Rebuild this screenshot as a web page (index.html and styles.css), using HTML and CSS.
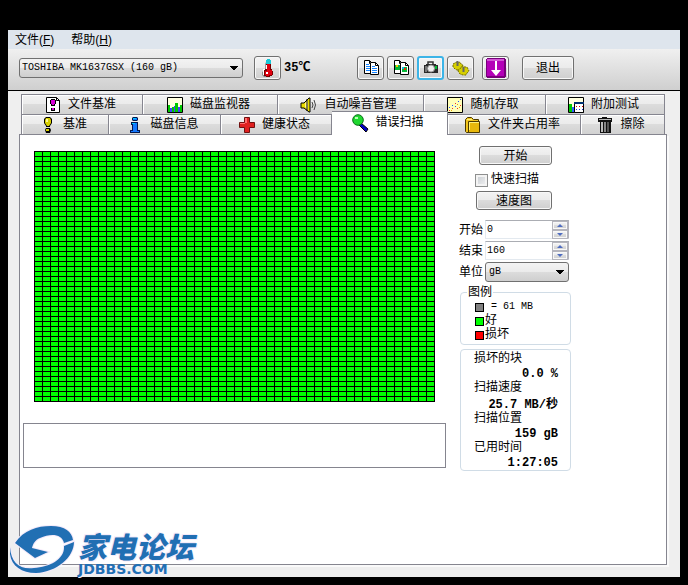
FILE: index.html
```html
<!DOCTYPE html>
<html lang="zh-CN">
<head>
<meta charset="utf-8">
<title>错误扫描</title>
<link rel="stylesheet" href="styles.css">
</head>
<body>
<main class="window">
  <nav class="menubar">
    <a href="#file">文件(<u>F</u>)</a>
    <a href="#help">帮助(<u>H</u>)</a>
  </nav>
  <header class="toolbar">
    <select class="drive" aria-label="磁盘"><option>TOSHIBA MK1637GSX (160 gB)</option></select>
    <button class="tool temp" type="button" aria-label="温度">
      <svg width="16" height="20" viewBox="0 0 16 20"><path d="M5 4v8l-3 2v3l2 2h5l2-2z" fill="#000" opacity=".35"/><path d="M6 2h5v9h1v2h1v4h-1v1h-2v1H6v-1H4v-2H3v-3h1v-2h2z" fill="#700"/><path d="M7 6h3v6h2v5H9v1H6v-1H5v-4h2z" fill="#e00010"/><path d="M6 2h1V1h3v1h1v4H6z" fill="#18c8d8"/><path d="M3 11h2v1H4v5H3zM6 14h2v2H6zM6 7h1v4H6z" fill="#fff"/></svg>
    </button>
    <output class="degrees">35℃</output>
    <div class="tools">
      <button class="tool" type="button" aria-label="复制文本">
        <svg width="18" height="18" viewBox="0 0 18 18"><path d="M2.500 1.500h5l3 3v10h-8z" fill="#fff" stroke="#000"/><path d="M7.500 1.500v3h3" fill="none" stroke="#000"/><path d="M4 5h3v1H4zm0 2h4v1H4zm0 2h4v1H4zm0 2h4v1H4z" fill="#1684ff"/><path d="M8.500 3.500h5l3 3v9h-8z" fill="#fff" stroke="#000"/><path d="M13.500 3.500v3h3" fill="none" stroke="#000"/><path d="M10 7h3v1h-3zm0 2h5v1h-5zm0 2h5v1h-5zm0 2h5v1h-5z" fill="#1684ff"/></svg>
      </button>
      <button class="tool" type="button" aria-label="复制图像">
        <svg width="18" height="18" viewBox="0 0 18 18"><path d="M2.500 1.500h5l3 3v10h-8z" fill="#fff" stroke="#000"/><path d="M7.500 1.500v3h3" fill="none" stroke="#000"/><path d="M3 6h5v5H3z" fill="#06b838"/><path d="M4 6h2v2H4z" fill="#f5c800"/><path d="M8.500 3.500h5l3 3v9h-8z" fill="#fff" stroke="#000"/><path d="M13.500 3.500v3h3" fill="none" stroke="#000"/><path d="M10 8h5v5h-5z" fill="#06b838"/><path d="M12 9h2v2h-2z" fill="#e03000"/><path d="M10 8h2v2h-2z" fill="#16b4e8"/></svg>
      </button>
      <button class="tool active" type="button" aria-label="截图">
        <svg width="18" height="18" viewBox="0 0 18 18"><path d="M6 5V3h5v2" fill="none" stroke="#333" stroke-width="1.500"/><path d="M2 6h2V5h10v1h2v8H2z" fill="#292929"/><path d="M3 7h2v6H3z" fill="#777"/><circle cx="9" cy="9.500" r="3.500" fill="#eee" stroke="#999"/><path d="M13 7h2v3h-2z" fill="#0b3"/></svg>
      </button>
      <button class="tool" type="button" aria-label="选项">
        <svg width="18" height="18" viewBox="0 0 18 18"><path d="M1 5l2-1 1-1 2 1 2-1 1 2 2 1-1 2 0 2-3 1-2 0-2-1-2-2z" fill="#d6cf00" stroke="#736f00" stroke-dasharray="2 1"/><path d="M6 12l1-2 2-1 1-2 3 1 2 0 1 2 1 2-2 2-1 2-3 0-3-1z" fill="#d6cf00" stroke="#736f00" stroke-dasharray="2 1"/><path d="M5.500 2v5M11.500 8v5" stroke="#666" stroke-width="2"/></svg>
      </button>
      <button class="tool save" type="button" aria-label="保存">
        <svg width="20" height="20" viewBox="0 0 20 20"><path d="M1 0h18v1h1v18h-1v1H1v-1H0V1h1z" fill="#77007a"/><path d="M1 1h17v17H1z" fill="#b400b8"/><path d="M1 1h17v2H1z" fill="#d255d5"/><path d="M9 3h2v9h4l-5 6-5-6h4z" fill="#fff"/></svg>
      </button>
      <button class="exit" type="button">退出</button>
    </div>
  </header>

  <div class="tabs" role="tablist">
    <div class="row back">
      <button type="button" role="tab"><svg width="18" height="18" viewBox="0 0 18 18"><path d="M2.500 1.500h10l3 3v12h-13z" fill="#fff" stroke="#000"/><path d="M12.500 1.500v3h3" fill="none" stroke="#000"/><path d="M7 3h4v1h1v4h-1v2H7V8H6V4h1zM7 12h4v3H7z" fill="#000"/><path d="M7 4h4v4h-1v1H8V8H7zM8 12h2v2H8z" fill="#d800d8"/></svg>文件基准</button>
      <button type="button" role="tab"><svg width="18" height="18" viewBox="0 0 18 18"><path d="M1.500 1.500h15v15h-15z" fill="#ffffe0" stroke="#000"/><path d="M2 9h2v7H2zm4 2h2v5H6zm3-4h3v9H9zm5 2h2v7h-2z" fill="#00c800"/><path d="M4 12h2v4H4zm4-2h1v6H8zm4 1h2v5h-2z" fill="#4040ff"/></svg>磁盘监视器</button>
      <button type="button" role="tab"><svg width="18" height="18" viewBox="0 0 18 18"><path d="M1 7h3l5-5h1v14H9l-5-4H1z" fill="#e8dc00" stroke="#000"/><path d="M5 7l3-3v10l-3-3z" fill="#fff790"/><path d="M7 3v12" stroke="#000"/><path d="M12 6q2 3 0 6M14 4q3 5 0 10" fill="none" stroke="#444"/></svg>自动噪音管理</button>
      <button type="button" role="tab"><svg width="18" height="18" viewBox="0 0 18 18"><path d="M1.500 1.500h15v15h-15z" fill="#ffffb8" stroke="#000"/><path d="M3 11h1v1H3zm3-2h1v1H6zm3 1h1v1H9zm3-5h1v1h-1zm2-2h1v1h-1z" fill="#2050ff"/><path d="M3 14h1v1H3zm3-2h1v1H6zm3-5h1v1H9zm2 5h1v1h-1zm3-3h1v1h-1z" fill="#f03030"/><path d="M5 14h1v1H5zm6-6h1v1h-1zm2 3h1v1h-1z" fill="#e6a000"/></svg>随机存取</button>
      <button type="button" role="tab"><svg width="18" height="18" viewBox="0 0 18 18"><path d="M1.500 1.500h15v15h-15z" fill="#ffffe0" stroke="#000"/><path d="M2 8h3v8H2z" fill="#00c800"/><path d="M5 11h2v5H5z" fill="#3060ff"/><path d="M7.500 7.500h9v9h-9z" fill="#fff" stroke="#000"/><path d="M7 6h10v2H7z" fill="#003070"/><path d="M9 10h1v1H9zm3 0h1v1h-1zm3 0h1v1h-1z" fill="#e00000"/><path d="M9 13h1v1H9zm3 0h1v1h-1zm3 0h1v1h-1z" fill="#2040e0"/></svg>附加测试</button>
    </div>
    <div class="row front">
      <button type="button" role="tab"><svg width="18" height="18" viewBox="0 0 18 18"><path d="M7 1h4l2 2v4l-2 3v1H7v-1L5 7V3z" fill="#000"/><path d="M7 2h4l1 2v3l-2 3H8L6 7V4z" fill="#d8d000"/><path d="M7 3h2v3H7z" fill="#fff79a"/><path d="M7 12h4l1 2-1 3H7l-1-3z" fill="#000"/><path d="M7 13h3v2H7z" fill="#d8d000"/></svg>基准</button>
      <button type="button" role="tab"><svg width="18" height="18" viewBox="0 0 18 18"><path d="M7 1h4l1 1v2l-1 1H7L6 4V2zM5 6h7v8h2v3H4v-3h2V9H5z" fill="#001850"/><path d="M7 2h4v2H7zM6 7h5v8h2v1H5v-1h2V8H6z" fill="#1478ff"/><path d="M7 2h3v1H7zM6 7h3v1H6z" fill="#00c8ff"/></svg>磁盘信息</button>
      <button type="button" role="tab"><svg width="18" height="18" viewBox="0 0 18 18"><path d="M6.500 1.500h5v5h5v5h-5v5h-5v-5h-5v-5h5z" fill="#e02020" stroke="#701010"/><path d="M7 2h2v5H7zM2 7h5v1H2z" fill="#ff7070"/></svg>健康状态</button>
      <button class="selected" type="button" role="tab" aria-selected="true"><svg width="18" height="18" viewBox="0 0 18 18"><path d="M10 9l7 6-2 3-7-7z" fill="#0000c8" stroke="#000"/><circle cx="7" cy="6" r="5.300" fill="#20d830" stroke="#087018"/><path d="M4 3h3v2H4z" fill="#baffb5"/></svg>错误扫描</button>
      <button type="button" role="tab"><svg width="18" height="18" viewBox="0 0 18 18"><path d="M1.500 3.500l2-2h4l2 2h5v13h-12l-1-1z" fill="#f1c51e" stroke="#4b3900"/><path d="M4.500 5.500h11v11h-11z" fill="#e8b80c" stroke="#4b3900"/><path d="M3 3h5v1H3zM5 6h10v1H5zm0 0h1v8H5z" fill="#fff17c"/></svg>文件夹占用率</button>
      <button type="button" role="tab"><svg width="18" height="18" viewBox="0 0 18 18"><path d="M6 1h5v1h5v4h-1v11H4V6H2V2h4z" fill="#111"/><path d="M3 3h12v1H3zM5 6h2v10H5z" fill="#bbb"/><path d="M8 6h2v10H8z" fill="#888"/><path d="M11 6h2v10h-2z" fill="#555"/></svg>擦除</button>
    </div>
  </div>

  <section class="panel">
    <div class="scan">
      <div class="blocks" role="img" aria-label="好"></div>
      <textarea class="log" aria-label="日志" readonly></textarea>
    </div>
    <form class="side">
      <button class="push start" type="button">开始</button>
      <label class="quick"><input type="checkbox">快速扫描</label>
      <button class="push map" type="button">速度图</button>
      <div class="fields">
        <label for="from">开始</label>
        <div class="spin"><input id="from" value="0"><button type="button" aria-label="增加"></button><button class="down" type="button" aria-label="减少"></button></div>
        <label for="to">结束</label>
        <div class="spin"><input id="to" value="160"><button type="button" aria-label="增加"></button><button class="down" type="button" aria-label="减少"></button></div>
        <label for="unit">单位</label>
        <select id="unit"><option>gB</option></select>
      </div>
      <fieldset class="legend">
        <legend>图例</legend>
        <ul>
          <li><i class="gray"></i><span class="size">= 61 MB</span></li>
          <li><i class="good"></i>好</li>
          <li><i class="bad"></i>损坏</li>
        </ul>
      </fieldset>
      <dl class="stats">
        <dt>损坏的块</dt><dd>0.0 %</dd>
        <dt>扫描速度</dt><dd class="speed">25.7 MB/秒</dd>
        <dt>扫描位置</dt><dd>159 gB</dd>
        <dt>已用时间</dt><dd>1:27:05</dd>
      </dl>
    </form>
  </section>

  <div class="logo">
    <svg width="66" height="50" viewBox="0 0 66 50"><g stroke="#f4eafa" stroke-width="2" paint-order="stroke" fill="#216fb3"><path d="M5 18C14 5 27 1 41 1c14 0 21 6 22 14L54 18C52 9 41 8 30 13c-5 2-7 6-8 10l16 4-13 6z"/><path d="M64 17c0 15-17 30-38 31C9 48-2 38 0 22 1 38 10 45 24 43 40 42 55 34 54 21z"/></g></svg>
    <div class="words"><span class="name">家电论坛</span><span class="site">JDBBS.COM</span></div>
  </div>
</main>
</body>
</html>
```
FILE: styles.css
```css
* { box-sizing: border-box; }

body {
  margin: 0;
  min-height: 100vh;
  padding: 30px 8px 8px;
  display: flex;
  background: #000;
  color: #000;
  font: 12px/16px "Liberation Mono", "Noto Sans CJK SC", monospace;
}

button, input, select, textarea { font: inherit; color: inherit; margin: 0; }

button {
  padding: 2px 0 0;
  border: 1px solid #707070;
  border-radius: 3px;
  background: linear-gradient(#f3f3f3, #ebebeb 49%, #dcdcdc 50%, #cfcfcf);
  box-shadow: inset 0 0 0 1px #f8f8f8;
}

svg { display: block; flex: none; }

select {
  appearance: none;
  border: 1px solid #707070;
  border-radius: 3px;
  font-size: 10px;
  background:
    linear-gradient(to bottom left, #000 50%, transparent 51%) no-repeat right 8px center / 4px 4px,
    linear-gradient(to bottom right, #000 50%, transparent 51%) no-repeat right 4px center / 4px 4px,
    linear-gradient(#f3f3f3, #ebebeb 49%, #dcdcdc 50%, #cfcfcf);
}

.window {
  position: relative;
  flex: 1;
  display: flex;
  flex-direction: column;
  background: #efefef;
}

.menubar {
  display: flex;
  gap: 17px;
  height: 19px;
  padding: 2px 7px 0;
  background: #dee5ed;
  font-family: "Liberation Sans", "Noto Sans CJK SC", sans-serif;
}

.menubar a { color: #000; text-decoration: none; }

.toolbar {
  display: flex;
  align-items: center;
  height: 42px;
  padding: 0 11px 3px;
  border-bottom: 1px solid #000;
  background: linear-gradient(#f0f0f0, #cfcfcf);
}

.drive { width: 224px; height: 20px; padding: 0 2px; }

.tool {
  display: grid;
  place-items: center;
  width: 27px;
  height: 24px;
  padding: 0;
}

.temp { margin: 0 3px 0 11px; }
.active { border: 2px solid #3cb4e7; }
.save { margin-left: 5px; }
.degrees { font-weight: bold; width: 73px; }
.tools { display: flex; gap: 3px; }
.exit { width: 52px; height: 24px; margin-left: 10px; }

.tabs { padding: 3px 15px 0 13px; }
.row { display: grid; }
.back { grid-template-columns: 122fr 135fr 146fr 122fr 119fr; }
.front { grid-template-columns: 88fr 112fr 111fr 116fr 133fr 84fr; }

.row button {
  display: flex;
  align-items: center;
  justify-content: center;
  gap: 6px;
  height: 20px;
  padding: 1px 4px 0 0;
  border: 1px solid #85858f;
  border-width: 1px 1px 0 0;
  border-radius: 0;
  background: linear-gradient(#f2f2f2, #ebebeb 49%, #dcdcdc 50%, #d2d2d2);
  box-shadow: inset 1px 1px #fff;
}

.row button:first-child { border-left-width: 1px; }

.front .selected {
  position: relative;
  height: 24px;
  margin: -3px 0 -1px;
  padding-bottom: 2px;
  background: #fff;
}

.panel {
  flex: 1;
  display: flex;
  align-items: flex-start;
  gap: 13px;
  margin: 0 13px 12px 11px;
  border: 1px solid #85858f;
  background: #fff;
  box-shadow: 2px 2px #fafafa;
}

.scan { width: 423px; margin-left: 3px; padding-top: 16px; }

.blocks {
  width: 401px;
  height: 251px;
  margin-left: 11px;
  background:
    linear-gradient(90deg, #000 1px, transparent 1px) 0 0 / 8px 5px,
    linear-gradient(#000 1px, #0f0 1px) 0 0 / 8px 5px;
}

.log {
  display: block;
  width: 100%;
  height: 45px;
  margin-top: 21px;
  border: 1px solid #85858f;
  background: #fff;
  resize: none;
}

.side { width: 112px; padding-top: 11px; }
.push { display: block; height: 19px; line-height: 16px; }
.start { width: 73px; margin-left: 20px; }
.map { width: 76px; margin-left: 17px; }

.quick {
  display: flex;
  align-items: center;
  gap: 3px;
  height: 26px;
  padding: 4px 0 0 16px;
}

.quick input {
  appearance: none;
  width: 13px;
  height: 13px;
  border: 1px solid #8e8f8f;
  background: linear-gradient(135deg, #c5cad0, #f4f4f4);
  box-shadow: inset 0 0 0 2px #f4f4f4;
}

.fields {
  display: grid;
  grid-template-columns: 24px 84px;
  align-items: center;
  gap: 2px;
  margin-top: 10px;
}

.fields label { padding-top: 2px; }
.fields select { height: 20px; padding: 0 3px; }

.spin {
  display: grid;
  grid-template: 9px 9px / 1fr 16px;
  height: 19px;
  border: 1px solid #e3e9ef;
  border-top-color: #abadb3;
  border-right-color: #b5b5bd;
}

.spin input {
  grid-row: 1 / 3;
  min-width: 0;
  border: 0;
  padding: 0 1px;
  background: none;
  font-size: 10px;
}

.spin button {
  display: grid;
  place-items: center;
  padding: 0;
  border-color: #b5b5bd;
  border-radius: 0;
}

.spin button::before {
  content: "";
  border: 3px solid transparent;
  border-top-width: 0;
  border-bottom-color: #4f6cc0;
}

.spin .down::before {
  border-width: 3px 3px 0;
  border-color: #4f6cc0 transparent transparent;
}

.legend, .stats {
  margin: 2px 0 0 1px;
  border: 1px solid #d0dce6;
  border-radius: 4px;
}

.legend { padding: 0 0 2px 14px; }
.legend legend { margin-left: -8px; padding: 1px 1px 0; }
.legend ul { margin: -1px 0 0; padding: 0; list-style: none; }
.legend li { display: flex; align-items: center; gap: 1px; line-height: 14px; }
.legend i { width: 9px; height: 9px; border: 1px solid #000; }
.gray { background: #808080; }
.good { background: #0f0; }
.bad { background: #f00; }
.size { padding-left: 6px; font-size: 10px; }

.stats { margin-top: 4px; padding: 2px 12px 0 13px; line-height: 15px; }
.stats dd { margin: 0; line-height: 14px; font-weight: bold; text-align: right; }
.stats .speed { padding-top: 2px; }

/* Site mark laid over the lower left corner of the window */
.logo {
  position: absolute;
  left: 2px;
  bottom: 2px;
  display: flex;
  gap: 2px;
  color: #216fb3;
}

.words { display: flex; flex-direction: column; padding-top: 2px; }

.name {
  font: italic 900 29px/36px "Noto Sans CJK SC", sans-serif;
  text-shadow: 1px 1px #f4eafa, -1px -1px #f4eafa;
}

.site {
  font: bold 14px/12px "DejaVu Sans", sans-serif;
  text-shadow: 1px 1px #f4eafa;
}
```
